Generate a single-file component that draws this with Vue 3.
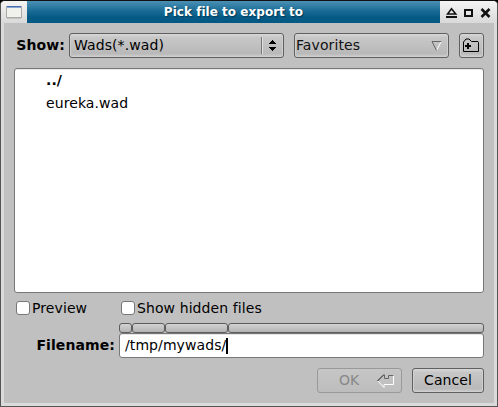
<script setup>
import { ref } from 'vue'

const files = ref([
  { name: '../', dir: true },
  { name: 'eureka.wad', dir: false },
])
const crumbs = [13, 33, 63, 256]
const filename = ref('/tmp/mywads/')
</script>

<template>
  <div class="window">
    <header class="titlebar">
      <div class="corner">
        <svg width="18" height="16" viewBox="0 0 18 16" shape-rendering="crispEdges">
          <path d="M1 1h16v12h-16z" fill="#a9aca8" />
          <path d="M2 13h14v1h-14z" fill="#c2c2c0" />
          <path d="M2 2h14v10h-14z" fill="#f0f0ed" />
          <path d="M2 1h14v1h-14z" fill="#456bac" />
          <path d="M2 2h14v1h-14z" fill="#8ba6d2" />
        </svg>
      </div>
      <h1 class="title">Pick file to export to</h1>
      <div class="controls">
        <svg width="50" height="14" viewBox="0 0 50 14">
          <path d="M5.500 1.800 9.700 7H1.500z" fill="#eee" stroke="#111" stroke-width="1.6" />
          <path d="M0 9h11v2h-11z" fill="#111" />
          <path d="M19 3h7v6h-7z" fill="none" stroke="#111" stroke-width="2" />
          <path d="M35.500 2l8 8M43.500 2l-8 8" fill="none" stroke="#111" stroke-width="2.5" />
        </svg>
      </div>
    </header>

    <main class="body">
      <div class="toolbar">
        <span class="label">Show:</span>
        <div class="button filter">
          <span>Wads(*.wad)</span>
          <span class="divider"></span>
          <svg width="9" height="13" viewBox="0 0 9 13" shape-rendering="crispEdges">
            <path d="M4 1h1v1h1v1h1v1h1v1h-7v-1h1v-1h1v-1h1zM1 8h7v1h-1v1h-1v1h-1v1h-1v-1h-1v-1h-1v-1h-1z" fill="#000" />
          </svg>
        </div>
        <div class="button favorites">
          <span>Favorites</span>
          <svg width="12" height="12" viewBox="0 0 12 12">
            <path d="M5.500 10.500 10.500 1" fill="none" stroke="#fff" />
            <path d="M10.500 1.500h-9.500l4.500 9" fill="none" stroke="#666" />
          </svg>
        </div>
        <div class="button new-folder">
          <svg width="17" height="15" viewBox="0 0 17 15">
            <path d="M.5 13.500v-9.500l2.500-3h3l2.500 2.500h6.500l.5 1v9z" fill="none" stroke="#000" />
            <path d="M2 7h6v2h-6zM4 5h2v6h-2z" fill="#000" />
          </svg>
        </div>
      </div>

      <ul class="files">
        <li v-for="f in files" :key="f.name" :class="{ dir: f.dir }">{{ f.name }}</li>
      </ul>

      <div class="options">
        <label class="option preview"><i class="check"></i>Preview</label>
        <label class="option"><i class="check"></i>Show hidden files</label>
      </div>

      <div class="name-row">
        <span class="label">Filename:</span>
        <div class="name-field">
          <div class="crumbs">
            <i v-for="w in crumbs" :key="w" class="crumb" :style="{ width: w + 'px' }"></i>
          </div>
          <div class="input"><span>{{ filename }}</span><i class="caret"></i></div>
        </div>
      </div>

      <footer class="actions">
        <div class="button ok">
          <span>OK</span>
          <svg width="18" height="14" viewBox="0 0 18 14">
            <path d="M16.500 1v9.500h-9.500v3L1 7" fill="none" stroke="#fff" />
            <path d="M.5 7 7 .5" fill="none" stroke="#111" />
            <path d="M7.500 1v3.500h4v-3h5" fill="none" stroke="#666" />
          </svg>
        </div>
        <div class="button cancel">Cancel</div>
      </footer>
    </main>
  </div>
</template>

<style>
body {
  margin: 0;
  background: #000;
}
</style>

<style scoped>
.window {
  box-sizing: border-box;
  width: 498px;
  height: 407px;
  display: flex;
  flex-direction: column;
  border: 1px solid #555;
  border-top-color: #111;
  border-radius: 5px 5px 1px 1px;
  background: #dadada;
  font: 14px/17px "DejaVu Sans", sans-serif;
  letter-spacing: 0.09px;
  color: #000;
  overflow: hidden;
}
.titlebar {
  height: 22px;
  display: flex;
  background: linear-gradient(#f4f4f4, #d9d9d9);
}
.corner {
  width: 26px;
  padding: 4px 0 0 4px;
  box-sizing: border-box;
}
.title {
  width: 413px;
  margin: 0;
  text-align: center;
  font-size: 12px;
  line-height: 22px;
  letter-spacing: 0.03px;
  color: #fff;
  text-shadow: 1px 1px 1px #023a58;
  background: linear-gradient(#4b90b5, #1a6c96 45%, #045a85 75%, #045a85);
}
.controls {
  padding: 6px 0 0 6px;
}
.body {
  flex: 1;
  box-sizing: border-box;
  margin: 0 3px 3px;
  padding: 10px 10px 0;
  background: #c0c0c0;
}
.toolbar {
  display: flex;
  align-items: center;
  height: 25px;
}
.label {
  font-weight: bold;
  text-align: right;
  white-space: nowrap;
}
.toolbar .label {
  width: 51px;
  margin-right: 4px;
}
.button {
  box-sizing: border-box;
  height: 25px;
  display: flex;
  align-items: center;
  border: 1px solid #606060;
  border-radius: 3px;
  background: linear-gradient(#d8d8d8, #c7c7c7 15%, #c0c0c0 50%, #b9b9b9 85%, #cfcfcf);
  box-shadow: inset 1px 0 #d0d0d0, inset -1px -1px #cfcfcf;
}
.filter {
  width: 215px;
  padding: 0 6px 0 4px;
}
.divider {
  width: 1px;
  height: 17px;
  margin: 0 5px 0 auto;
  background: #777;
  border-right: 1px solid #e0e0e0;
}
.favorites {
  width: 155px;
  margin: 0 10px;
  padding: 0 5px 0 1px;
  justify-content: space-between;
  color: #111;
}
.new-folder {
  width: 25px;
  justify-content: center;
}
.files {
  box-sizing: border-box;
  height: 225px;
  margin: 10px 0 0;
  padding: 0 0 0 31px;
  list-style: none;
  border: 1px solid #777;
  border-radius: 3px;
  background: #fff;
  box-shadow: inset 0 1px #e9e9e9;
}
.files li {
  height: 23px;
  line-height: 22px;
}
.dir {
  font-weight: bold;
}
.options {
  display: flex;
  padding: 7px 0 0 2px;
  height: 16px;
}
.option {
  display: flex;
  align-items: center;
  gap: 2px;
}
.preview {
  width: 105px;
}
.check {
  box-sizing: border-box;
  width: 14px;
  height: 14px;
  border: 1px solid #777;
  border-radius: 3px;
  background: #fff;
}
.name-row {
  display: flex;
  margin-top: 7px;
}
.name-row .label {
  width: 101px;
  margin: 14px 4px 0 0;
}
.name-field {
  width: 365px;
}
.crumbs {
  display: flex;
}
.crumb {
  box-sizing: border-box;
  height: 10px;
  border: 1px solid #5d5d5d;
  border-radius: 3px;
  background: linear-gradient(#d2d2d2, #b4b4b4);
}
.input {
  box-sizing: border-box;
  height: 25px;
  display: flex;
  align-items: center;
  padding-left: 5px;
  border: 1px solid #777;
  border-radius: 3px;
  background: #fff;
  box-shadow: inset 0 1px #e5e5e5;
}
.caret {
  width: 2px;
  height: 16px;
  background: #000;
}
.actions {
  display: flex;
  justify-content: flex-end;
  gap: 10px;
  margin-top: 10px;
}
.ok {
  width: 85px;
  padding: 0 6px 0 21px;
  justify-content: space-between;
  color: #888;
  border-color: #999;
  background: linear-gradient(#c6c6c6, #bdbdbd);
  box-shadow: none;
}
.cancel {
  width: 72px;
  justify-content: center;
}
</style>
